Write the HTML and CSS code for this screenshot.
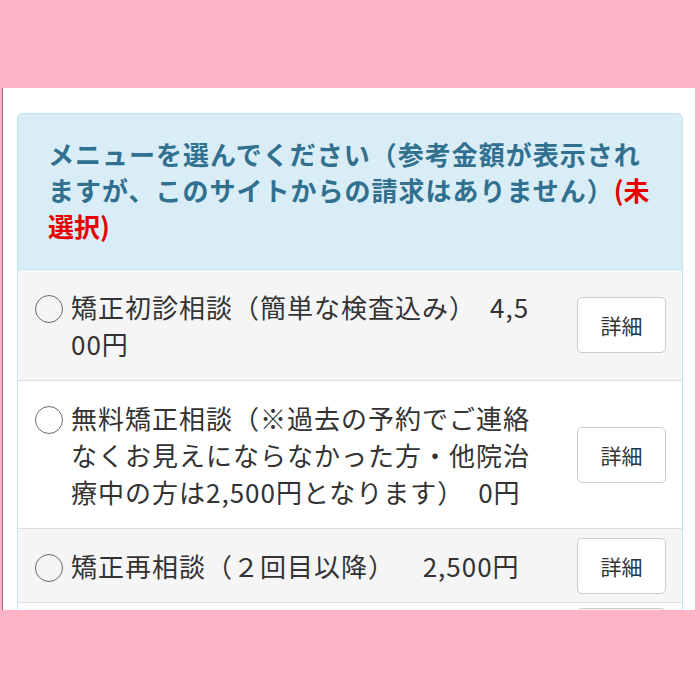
FILE: index.html
```html
<!DOCTYPE html>
<html lang="ja">
<head>
<meta charset="utf-8">
<title>メニュー選択</title>
<link rel="stylesheet" href="styles.css">
</head>
<body>
<div class="frame">
  <div class="panel">
    <div class="panel-heading">メニューを選んでください（参考金額が表示されますが、このサイトからの請求はありません）<span class="unselected">(未選択)</span></div>
    <div class="row row-gray">
      <label class="opt"><span class="radio"></span><span class="opt-text">矯正初診相談（簡単な検査込み）　4,500円</span></label>
      <button class="btn">詳細</button>
    </div>
    <div class="row">
      <label class="opt"><span class="radio"></span><span class="opt-text">無料矯正相談（※過去の予約でご連絡なくお見えにならなかった方・他院治療中の方は2,500円となります）　0円</span></label>
      <button class="btn">詳細</button>
    </div>
    <div class="row row-gray">
      <label class="opt"><span class="radio"></span><span class="opt-text">矯正再相談（２回目以降）　&nbsp; 2,500円</span></label>
      <button class="btn">詳細</button>
    </div>
    <div class="row row-next">
      <span class="opt"></span>
      <span class="btn btn-blank"></span>
    </div>
  </div>
</div>
</body>
</html>
```

FILE: styles.css
```css
html, body {
  margin: 0;
  padding: 0;
  background: #ffb3c6;
}
body {
  font-family: "Noto Sans CJK JP", "Noto Sans", sans-serif;
}
.frame {
  margin: 88px 5px 0 2px;
  height: 522px;
  overflow: hidden;
  background: #ffffff;
  border-left: 1px solid #9b6a74;
  padding: 25px 12px 0 14px;
  box-sizing: border-box;
}
.panel {
  border: 1px solid #bce8f1;
  border-radius: 5px;
  overflow: hidden;
}
.panel-heading {
  background: #d9edf7;
  color: #31708f;
  font-weight: bold;
  font-size: 26px;
  letter-spacing: 1px;
  line-height: 36px;
  padding: 22px 26px 25px 30px;
  border-bottom: 1px solid #bce8f1;
  word-break: break-all;
}
.unselected {
  color: #e60000;
  letter-spacing: 0;
}
.row {
  display: flex;
  align-items: center;
  padding: 8px 16px 8px 17px;
  border-top: 1px solid #dddddd;
  background: #ffffff;
}
.panel-heading + .row {
  border-top: none;
}
.row-gray {
  background: #f5f5f5;
}
.opt {
  flex: 1;
  display: flex;
  align-items: flex-start;
  padding: 10px 0;
  margin-right: 38px;
  color: #333333;
  font-size: 26px;
  letter-spacing: 1px;
  line-height: 37px;
  word-break: break-all;
}
.radio {
  flex: none;
  width: 26px;
  height: 26px;
  border: 1.5px solid #6a6a6a;
  border-radius: 50%;
  margin: 7px 8px 0 0;
}
.btn {
  flex: none;
  width: 89px;
  height: 56px;
  background: #ffffff;
  border: 1px solid #cccccc;
  border-radius: 5px;
  color: #333333;
  font-family: "Noto Sans CJK JP", sans-serif;
  font-size: 21px;
  padding: 0;
  box-sizing: border-box;
}
.row-next {
  padding-top: 5px;
}
.btn-blank {
  display: block;
  background: #f7f7f7;
}
```
